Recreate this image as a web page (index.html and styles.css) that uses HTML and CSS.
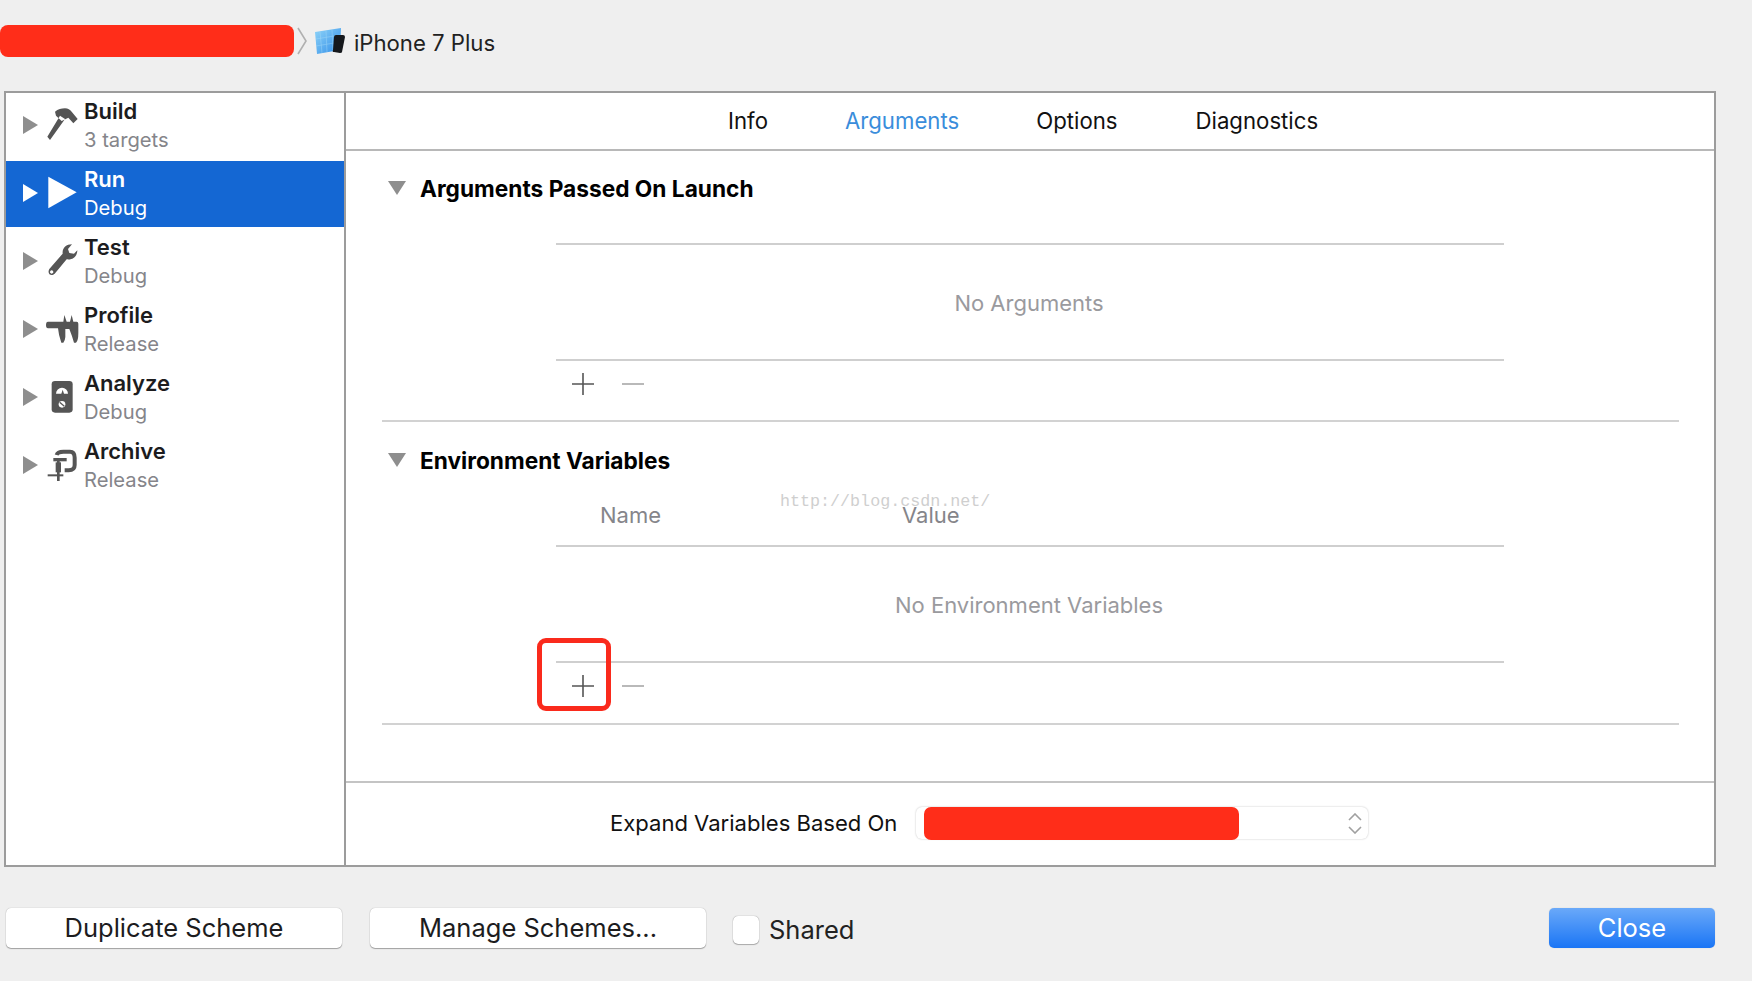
FILE: index.html
```html
<!DOCTYPE html>
<html lang="en">
<head>
<meta charset="utf-8">
<title>Scheme editor</title>
<link rel="stylesheet" href="styles.css">
</head>
<body>
<div class="toolbar">
  <div class="redacted-crumb"></div>
  <svg class="crumb-chevron" viewBox="0 0 10 28"><path d="M1 1 L9 14 L1 27" fill="none" stroke="#b0b0b0" stroke-width="1.6"/></svg>
  <svg class="device-icon" viewBox="0 0 30 27">
    <defs>
      <linearGradient id="dev" x1="0" y1="0" x2="1" y2="1"><stop offset="0" stop-color="#8fd4f8"/><stop offset="1" stop-color="#2f8ce8"/></linearGradient>
    </defs>
    <path d="M0 4 L26 0 L25 22 L2 26 Z" fill="url(#dev)"/>
    <path d="M5 4 L7 25 M11 3 L12 24 M17 2 L18 23 M1 11 L25 7 M1 18 L25 14" stroke="#a6dcfa" stroke-width=".6" opacity=".7"/>
    <path d="M21 7 L28 7 Q30 7 30 9 L27 24 Q27 25 25 25 L19 24 Q17 24 18 22 L19 9 Q19 7 21 7Z" fill="#15181c"/>
  </svg>
  <span class="device-name">iPhone 7 Plus</span>
</div>

<div class="panel">
  <nav class="sidebar">
    <div class="row">
      <svg class="disclosure" viewBox="0 0 15 18"><path d="M0 0 L15 9 L0 18Z" fill="#8e8e8e"/></svg>
      <svg class="action-icon" viewBox="0 0 102 114"><path d="M4 95 L12 105 L57 42 L42 32Z M27 20 C36 12 46 10 57 10 C66 10 72 14 77 20 L95 42 L82 55 L67 38 L47 48 L30 32Z" fill="#555"/></svg>
      <div class="row-text"><div class="row-title">Build</div><div class="row-sub">3 targets</div></div>
    </div>
    <div class="row active">
      <svg class="disclosure" viewBox="0 0 15 18"><path d="M0 0 L15 9 L0 18Z" fill="#fff"/></svg>
      <svg class="action-icon" viewBox="0 0 102 114"><path d="M7 11 L92 58 L7 106Z" fill="#fff"/></svg>
      <div class="row-text"><div class="row-title">Run</div><div class="row-sub">Debug</div></div>
    </div>
    <div class="row">
      <svg class="disclosure" viewBox="0 0 15 18"><path d="M0 0 L15 9 L0 18Z" fill="#8e8e8e"/></svg>
      <svg class="action-icon" viewBox="0 0 102 114"><path fill-rule="evenodd" d="M10 84 L50 38 C48 22 60 10 78 10 L66 24 L70 36 L84 38 L94 28 C94 46 80 58 62 55 L26 98 C16 108 2 98 10 84Z M17 88 A5 5 0 1 0 17.01 88Z" fill="#555"/></svg>
      <div class="row-text"><div class="row-title">Test</div><div class="row-sub">Debug</div></div>
    </div>
    <div class="row">
      <svg class="disclosure" viewBox="0 0 15 18"><path d="M0 0 L15 9 L0 18Z" fill="#8e8e8e"/></svg>
      <svg class="action-icon" viewBox="0 0 102 114"><path d="M6 38 H52 L55 18 L62 38 H72 L77 18 L82 38 H92 Q97 38 97 44 V72 Q97 96 90 101 L84 101 Q78 80 70 60 H58 V84 Q57 96 52 101 L46 101 Q38 80 36 58 H6 Q0 58 0 48 Q0 38 6 38Z" fill="#555"/></svg>
      <div class="row-text"><div class="row-title">Profile</div><div class="row-sub">Release</div></div>
    </div>
    <div class="row">
      <svg class="disclosure" viewBox="0 0 15 18"><path d="M0 0 L15 9 L0 18Z" fill="#8e8e8e"/></svg>
      <svg class="action-icon" viewBox="0 0 102 114"><rect x="17" y="12" width="63" height="95" rx="10" fill="#555"/><path d="M30 50 A18 18 0 0 1 66 50 L54 50 L50 38 L46 50Z" fill="#fff"/><circle cx="48" cy="82" r="10" fill="#fff"/><path d="M41 76 L55 88" stroke="#555" stroke-width="4"/></svg>
      <div class="row-text"><div class="row-title">Analyze</div><div class="row-sub">Debug</div></div>
    </div>
    <div class="row">
      <svg class="disclosure" viewBox="0 0 15 18"><path d="M0 0 L15 9 L0 18Z" fill="#8e8e8e"/></svg>
      <svg class="action-icon" viewBox="0 0 102 114"><path d="M32 30 C34 22 42 20 52 20 H72 C82 20 86 28 86 38 V60 C86 72 78 76 68 76 H56" fill="none" stroke="#555" stroke-width="12"/><path d="M22 44 H62" stroke="#555" stroke-width="10"/><path d="M37 48 V108" stroke="#555" stroke-width="8"/><rect x="29" y="52" width="16" height="30" fill="#555"/><path d="M5 91 H52" stroke="#555" stroke-width="6"/></svg>
      <div class="row-text"><div class="row-title">Archive</div><div class="row-sub">Release</div></div>
    </div>
  </nav>

  <main class="main">
    <div class="tabs">
      <span class="tab">Info</span>
      <span class="tab tab-active">Arguments</span>
      <span class="tab">Options</span>
      <span class="tab tab-last">Diagnostics</span>
    </div>

    <div class="content">
      <section class="section">
        <div class="section-head">
          <svg class="caret" viewBox="0 0 18 14"><path d="M0 0 H18 L9 14Z" fill="#8e8e8e"/></svg>
          <h2 class="section-title">Arguments Passed On Launch</h2>
        </div>
        <div class="table table-plain">
          <div class="table-body">No Arguments</div>
          <div class="table-actions">
            <svg class="plus" viewBox="0 0 22 22"><path d="M11 0 V22 M0 11 H22" stroke="#555" stroke-width="1.6"/></svg>
            <svg class="minus" viewBox="0 0 22 4"><path d="M0 2 H22" stroke="#a8a8a8" stroke-width="1.6"/></svg>
          </div>
        </div>
      </section>

      <section class="section section-env">
        <div class="section-head">
          <svg class="caret" viewBox="0 0 18 14"><path d="M0 0 H18 L9 14Z" fill="#8e8e8e"/></svg>
          <h2 class="section-title">Environment Variables</h2>
        </div>
        <div class="table">
          <div class="table-header">
            <span class="col-name">Name</span>
            <span class="col-value">Value</span>
            <span class="watermark">http://blog.csdn.net/</span>
          </div>
          <div class="table-body">No Environment Variables</div>
          <div class="table-actions">
            <svg class="plus" viewBox="0 0 22 22"><path d="M11 0 V22 M0 11 H22" stroke="#555" stroke-width="1.6"/></svg>
            <svg class="minus" viewBox="0 0 22 4"><path d="M0 2 H22" stroke="#a8a8a8" stroke-width="1.6"/></svg>
            <div class="highlight-box"></div>
          </div>
        </div>
      </section>
    </div>

    <div class="expand-bar">
      <span class="expand-label">Expand Variables Based On</span>
      <div class="popup">
        <div class="popup-redacted"></div>
        <svg class="popup-arrows" viewBox="0 0 14 21"><path d="M1 7 L7 1 L13 7 M1 14 L7 20 L13 14" fill="none" stroke="#a0a0a0" stroke-width="1.6"/></svg>
      </div>
    </div>
  </main>
</div>

<div class="footer">
  <button class="btn btn-dup">Duplicate Scheme</button>
  <button class="btn btn-manage">Manage Schemes...</button>
  <label class="shared"><span class="checkbox"></span><span>Shared</span></label>
  <button class="btn btn-close">Close</button>
</div>
</body>
</html>
```
FILE: styles.css
```css
* { box-sizing: border-box; }
html, body { margin: 0; padding: 0; }
body {
  width: 1752px;
  height: 981px;
  overflow: hidden;
  background: #efefef;
  font-family: Inter, "Liberation Sans", sans-serif;
  color: #1c1c1e;
}
svg { display: block; flex: none; }

.toolbar {
  height: 91px;
  padding-bottom: 9px;
  display: flex;
  align-items: center;
}
.redacted-crumb {
  width: 294px;
  height: 32px;
  background: #ff2d19;
  border-radius: 8px;
}
.crumb-chevron { width: 10px; height: 28px; margin-left: 3px; }
.device-icon { width: 30px; height: 27px; margin-left: 8px; }
.device-name { font-size: 22.15px; margin-left: 9px; margin-top: 3px; color: #222; }

.panel {
  width: 1712px;
  height: 776px;
  margin-left: 4px;
  border: 2px solid #9c9c9c;
  background: #fff;
  display: flex;
}
.sidebar { width: 340px; border-right: 2px solid #9c9c9c; flex: none; }
.row {
  height: 68px;
  padding-left: 17px;
  display: flex;
  align-items: center;
}
.row.active {
  background: linear-gradient(#1467d3, #1467d3) no-repeat top left / 100% 66px;
  color: #fff;
}
.disclosure { width: 15px; height: 18px; margin-bottom: 4px; }
.action-icon { width: 34px; height: 38px; margin-left: 8px; margin-bottom: 6px; }
.row-text { margin-left: 4px; align-self: flex-start; padding-top: 4px; }
.row-title { font-size: 22px; line-height: 29px; font-weight: 600; }
.row-sub { font-size: 20.2px; line-height: 29px; margin-top: -1px; color: #85858a; }
.row.active .row-sub { color: #fff; }

.main { flex: 1; display: flex; flex-direction: column; min-width: 0; }
.tabs {
  height: 58px;
  flex: none;
  border-bottom: 2px solid #b8b8b8;
  padding: 0 0 1px 382px;
  display: flex;
  align-items: center;
  gap: 77px;
  font-size: 22.2px;
  color: #111;
}
.tab-active { color: #3a8ddb; }
.tab-last { margin-left: 1px; }

.content { flex: 1; padding: 0 35px 0 36px; }
.section { border-bottom: 2px solid #d2d2d2; padding: 26px 0 15px; }
.section-env { padding-top: 27px; padding-bottom: 16px; }
.section-head { height: 24px; display: flex; align-items: center; }
.caret { width: 18px; height: 14px; margin-left: 6px; margin-bottom: 2px; }
.section-title { margin: 0 0 0 14px; font-size: 22.7px; font-weight: 700; color: #000; line-height: 24px; }

.table { width: 948px; margin-left: 174px; position: relative; }
.table-plain { margin-top: 42px; border-top: 2px solid #cfcfcf; }
.table-header {
  height: 74px;
  border-bottom: 2px solid #cfcfcf;
  padding: 24px 0 0 44px;
  display: flex;
  position: relative;
  font-size: 22px;
  line-height: 36px;
  color: #85858a;
}
.col-name { width: 302px; }
.watermark {
  position: absolute;
  left: 224px;
  top: 11px;
  font-family: "Liberation Mono", monospace;
  font-size: 16.7px;
  line-height: 36px;
  color: #cfcfcf;
}
.table-body {
  height: 116px;
  border-bottom: 2px solid #cfcfcf;
  padding: 2px 2px 0 0;
  display: flex;
  align-items: center;
  justify-content: center;
  font-size: 22px;
  color: #9a9a9e;
}
.table-actions {
  height: 44px;
  padding: 1px 0 0 16px;
  display: flex;
  align-items: center;
  position: relative;
}
.plus { width: 22px; height: 22px; }
.minus { width: 22px; height: 4px; margin-left: 28px; }
.highlight-box {
  position: absolute;
  left: -19px;
  top: -25px;
  width: 74px;
  height: 73px;
  border: 5.5px solid #fa2a1c;
  border-radius: 9px;
}

.expand-bar {
  height: 84px;
  flex: none;
  border-top: 2px solid #c4c4c4;
  padding: 0 0 2px 264px;
  display: flex;
  align-items: center;
  gap: 19px;
}
.expand-label { font-size: 22.05px; color: #111; }
.popup {
  width: 452px;
  height: 32px;
  border-radius: 6px;
  background: #fff;
  box-shadow: 0 0 2px rgba(0,0,0,.25);
  display: flex;
  align-items: center;
  padding-left: 8px;
}
.popup-redacted { width: 315px; height: 33px; background: #ff2d19; border-radius: 7px; }
.popup-arrows { width: 14px; height: 21px; margin-left: 109px; }

.footer {
  margin-top: 41px;
  padding: 0 37px 0 6px;
  display: flex;
  align-items: center;
}
.btn {
  height: 40px;
  border: 0;
  border-radius: 5px;
  background: #fff;
  box-shadow: 0 0 1px rgba(0,0,0,.35), 0 1px 1px rgba(0,0,0,.3);
  font-family: inherit;
  font-size: 25.5px;
  color: #1c1c1e;
  padding: 0 0 2px;
}
.btn-dup { width: 336px; }
.btn-manage { width: 336px; margin-left: 28px; }
.shared { display: flex; align-items: center; margin-left: 27px; font-size: 25.5px; color: #222; padding-top: 3px; }
.checkbox {
  width: 26px;
  height: 28px;
  margin-right: 10px;
  background: #fff;
  border-radius: 5px;
  box-shadow: 0 0 1px rgba(0,0,0,.5), 0 1px 1px rgba(0,0,0,.25);
}
.btn-close {
  width: 166px;
  margin-left: auto;
  background: linear-gradient(#6aa9f9, #1a75f5);
  color: #fff;
  box-shadow: 0 0 1px rgba(0,0,0,.2);
}
```
